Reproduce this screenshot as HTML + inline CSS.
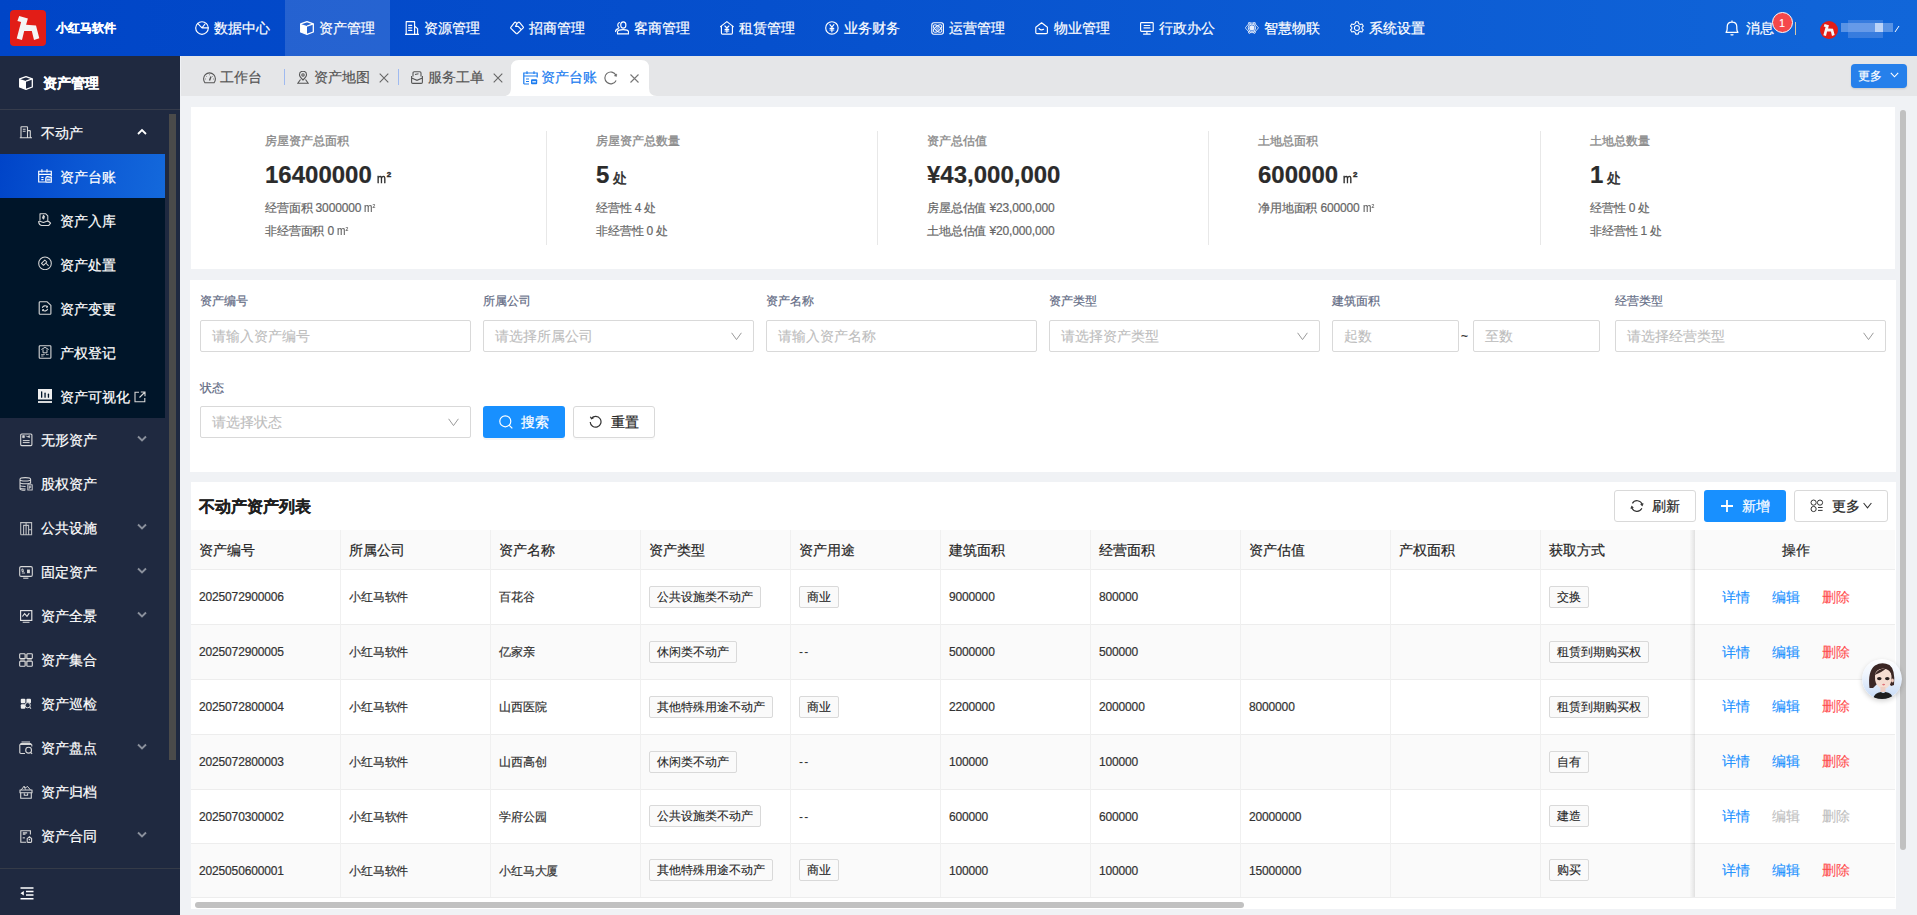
<!DOCTYPE html>
<html><head><meta charset="utf-8">
<style>
*{box-sizing:border-box;margin:0;padding:0}
html,body{width:1917px;height:915px;overflow:hidden;font-family:"Liberation Sans",sans-serif;background:#f0f2f5;color:#333;position:relative}
body{-webkit-text-stroke:0.2px currentColor}
.a{position:absolute}
svg{display:block}
#hdr{position:absolute;left:0;top:0;width:1917px;height:56px;background:linear-gradient(90deg,#0045c7 0%,#0650cd 40%,#1166d9 100%)}
.nav{position:absolute;top:0;height:56px;width:105px;color:#fff;font-size:14px}
.nav.on{background:rgba(255,255,255,0.14)}
.nav svg{position:absolute}
.nav span{position:absolute;left:34px;top:18px;line-height:20px}
#side{position:absolute;left:0;top:56px;width:180px;height:859px;background:#1f2940}
.si{position:absolute;left:0;width:165px;height:44px;color:#fff;font-size:14px}
.si svg{position:absolute}
.si span{position:absolute;left:41px;top:12.5px;line-height:20px}

.si.sub span{left:60px}

#tabs{position:absolute;left:181px;top:56px;width:1736px;height:40px;background:#e5e6e8}
.tab{position:absolute;top:60px;height:36px;font-size:14px;color:#555}
.card{position:absolute;background:#fff}
</style></head><body>
<div id="hdr">
  <div class="a" style="left:10px;top:10px;width:36px;height:36px;background:#e21d17;border-radius:4px">
    <svg width="36" height="36" viewBox="0 0 36 36"><path d="M9.2 6.1 L17.9 8.5 L16.1 14.8 L26 15.5 L29.3 28.2 L24 29.9 L21.8 21 L14.2 21 L12 29.9 L6.7 28.4 L11.1 12 L7.4 11.1 Z" fill="#f4f4f4"/></svg>
  </div>
  <div class="a" style="left:56px;top:18px;font-size:12px;font-weight:bold;color:#fff;line-height:20px">小红马软件</div>
    <div class="nav" style="left:180px"><svg width="14" height="14" viewBox="0 0 14 14" fill="none" stroke="#fff" stroke-width="1.15" stroke-linecap="round" stroke-linejoin="round" style="left:15px;top:21px"><circle cx="7" cy="7" r="6.3"/><path d="M2.6 2.4 L7 6.8 L10 3 M7 6.8 H13.3"/></svg><span>数据中心</span></div>
  <div class="nav on" style="left:285px"><svg width="14" height="14" viewBox="0 0 14 14" style="left:15px;top:21px"><path d="M0.7 2.9 L7 0.7 L13.3 2.9 L13.3 11 L7 13.3 L0.7 11 Z" fill="none" stroke="#fff" stroke-width="1.3" stroke-linejoin="round"/><path d="M0.7 2.9 L7 5.1 L7 13.3 L0.7 11 Z" fill="#fff"/><path d="M7 5.1 L13.3 2.9" stroke="#fff" stroke-width="1.2"/></svg><span>资产管理</span></div>
  <div class="nav" style="left:390px"><svg width="14" height="14" viewBox="0 0 14 14" fill="none" stroke="#fff" stroke-width="1.15" stroke-linecap="round" stroke-linejoin="round" style="left:15px;top:21px"><path d="M0.4 13.3 H13.6 M1.2 13.3 V0.6 H9.6 V13.3 M9.6 5.2 L12.6 7.6 V13.3 M3.6 4.3 H6.8 M3.6 6.8 H6.8 M3.6 9.4 H6.8"/></svg><span>资源管理</span></div>
  <div class="nav" style="left:495px"><svg width="14" height="14" viewBox="0 0 14 14" fill="none" stroke="#fff" stroke-width="1.15" stroke-linecap="round" stroke-linejoin="round" style="left:15px;top:21px"><path d="M0.8 6.4 L4.6 1.4 Q5 1 5.5 1.3 L6.8 2.4 L8.6 1.2 Q9.1 0.9 9.5 1.3 L13.2 5.9 Q13.6 6.4 13.2 6.9 L7.4 12.5 Q6.8 13 6.2 12.5 L0.9 7.3 Q0.5 6.9 0.8 6.4 Z M7 2.6 L5.5 5.3 H8.1 L11 8.3"/></svg><span>招商管理</span></div>
  <div class="nav" style="left:600px"><svg width="14" height="14" viewBox="0 0 14 14" fill="none" stroke="#fff" stroke-width="1.15" stroke-linecap="round" stroke-linejoin="round" style="left:15px;top:21px"><ellipse cx="8.3" cy="4" rx="2.6" ry="3.1"/><path d="M2.5 12.9 V11 Q2.5 8.6 8.2 8.6 Q13.5 8.6 13.5 11 V12.9 Z M4.4 1.5 Q2.6 2.3 2.8 4.4 Q3 6 4 6.6 M3.4 7.6 Q0.6 8.3 0.6 10.6"/></svg><span>客商管理</span></div>
  <div class="nav" style="left:705px"><svg width="14" height="14" viewBox="0 0 14 14" fill="none" stroke="#fff" stroke-width="1.15" stroke-linecap="round" stroke-linejoin="round" style="left:15px;top:21px"><path d="M0.5 5.6 L6.9 0.6 L13.3 5.6 M1.4 5.2 V12 Q1.4 13.1 2.5 13.1 H11.3 Q12.4 13.1 12.4 12 V5.2 M4.9 5 L6.9 7 L8.9 5 M6.9 7 V11.3 M5 8.3 H8.8 M5 10 H8.8"/></svg><span>租赁管理</span></div>
  <div class="nav" style="left:810px"><svg width="14" height="14" viewBox="0 0 14 14" fill="none" stroke="#fff" stroke-width="1.15" stroke-linecap="round" stroke-linejoin="round" style="left:15px;top:21px"><circle cx="6.9" cy="6.9" r="6.2"/><path d="M4.9 3.7 L6.9 6.2 L8.9 3.7 M6.9 6.2 V10.8 M5 7.3 H8.8 M5 9 H8.8"/></svg><span>业务财务</span></div>
  <div class="nav" style="left:915px"><svg width="14" height="14" viewBox="0 0 14 14" fill="none" stroke="#fff" stroke-width="1.1" style="left:15.5px;top:21.5px"><rect x="0.8" y="0.8" width="11.6" height="11.4" rx="2.2"/><ellipse cx="6.6" cy="6.5" rx="5" ry="2.3" transform="rotate(40 6.6 6.5)" stroke-width="0.95"/><ellipse cx="6.6" cy="6.5" rx="5" ry="2.3" transform="rotate(-40 6.6 6.5)" stroke-width="0.95"/><circle cx="6.6" cy="6.5" r="1.7" fill="#fff" fill-opacity="0.5" stroke="none"/></svg><span>运营管理</span></div>
  <div class="nav" style="left:1020px"><svg width="14" height="14" viewBox="0 0 14 14" fill="none" stroke="#fff" stroke-width="1.15" stroke-linecap="round" stroke-linejoin="round" style="left:15px;top:22px"><path d="M0.8 5.2 L6.6 0.8 L12.4 5.2 V10.4 Q12.4 11.6 11.2 11.6 H2 Q0.8 11.6 0.8 10.4 Z M4 6.5 Q6 8.8 8.6 7.3"/></svg><span>物业管理</span></div>
  <div class="nav" style="left:1125px"><svg width="14" height="14" viewBox="0 0 14 14" fill="none" stroke="#fff" stroke-width="1.15" stroke-linecap="round" stroke-linejoin="round" style="left:15px;top:22px"><rect x="0.6" y="0.6" width="12.6" height="8.8" rx="0.8"/><path d="M6.9 9.5 V11.8 M3.5 12.1 H10.3 M4.1 3.5 H9.8"/><path d="M4.1 5.9 H9.8" stroke-width="1.6" stroke-opacity="0.7"/></svg><span>行政办公</span></div>
  <div class="nav" style="left:1230px"><svg width="14" height="14" viewBox="0 0 14 14" fill="none" stroke="#fff" stroke-width="0.9" style="left:15px;top:22px"><path d="M4.4 1 H9.4 L13.5 5.8 L9.4 10.6 H4.4 L0.3 5.8 Z" stroke-opacity="0.85"/><circle cx="4.4" cy="1.2" r="0.9" fill="#0b57d0"/><circle cx="9.4" cy="1.2" r="0.9" fill="#0b57d0"/><circle cx="4.4" cy="10.4" r="0.9" fill="#0b57d0"/><circle cx="9.4" cy="10.4" r="0.9" fill="#0b57d0"/><circle cx="6.9" cy="5.8" r="3.7" fill="#0b57d0"/><circle cx="6.9" cy="5.8" r="2.6" fill="#fff" fill-opacity="0.9" stroke="none"/></svg><span>智慧物联</span></div>
  <div class="nav" style="left:1335px"><svg width="14" height="14" viewBox="0 0 14 14" fill="none" stroke="#fff" stroke-width="1.05" stroke-linejoin="round" style="left:15px;top:21px"><path d="M5.6 0.8 H8.2 L8.7 2.6 L10.3 3.5 L12 2.9 L13.3 5.1 L12 6.3 V7.6 L13.3 8.8 L12 11 L10.3 10.4 L8.7 11.3 L8.2 13.1 H5.6 L5.1 11.3 L3.5 10.4 L1.8 11 L0.5 8.8 L1.8 7.6 V6.3 L0.5 5.1 L1.8 2.9 L3.5 3.5 L5.1 2.6 Z"/><circle cx="6.9" cy="6.95" r="2.5"/></svg><span>系统设置</span></div>
  <!-- right -->
  <svg class="a" style="left:1725px;top:20px" width="14" height="16" viewBox="0 0 14 16" fill="none" stroke="#fff" stroke-width="1.25" stroke-linejoin="round"><path d="M1 12.3 Q2.2 11 2.2 8.5 V6.8 Q2.2 2.2 7 2.2 Q11.8 2.2 11.8 6.8 V8.5 Q11.8 11 13 12.3 Z M5.6 14.4 Q7 15.4 8.4 14.4 M7 0.6 V2.2"/></svg>
  <div class="a" style="left:1746px;top:18px;font-size:14px;color:#fff;line-height:20px">消息</div>
  <div class="a" style="left:1771.5px;top:11.5px;width:21px;height:21px;border-radius:50%;background:#f5484b;border:1px solid #fff;color:#fff;font-size:10px;line-height:21px;text-align:center;font-family:'Liberation Sans',sans-serif">1</div>
  <div class="a" style="left:1795px;top:22px;width:1px;height:13px;background:#d8c9a8"></div>
  <div class="a" style="left:1820px;top:21px;width:18px;height:18px;border-radius:50%;background:#e21d17;overflow:hidden">
    <svg width="18" height="18" viewBox="0 0 36 36"><path d="M9.2 6.1 L17.9 8.5 L16.1 14.8 L26 15.5 L29.3 28.2 L24 29.9 L21.8 21 L14.2 21 L12 29.9 L6.7 28.4 L11.1 12 L7.4 11.1 Z" fill="#f4f4f4"/></svg>
  </div>
  <div class="a" style="left:1841px;top:20px;width:52px;height:18px;filter:blur(0.6px)">
    <div class="a" style="left:0;top:3px;width:52px;height:9px;background:rgba(150,185,240,0.55)"></div>
    <div class="a" style="left:7px;top:0;width:35px;height:18px;background:rgba(130,170,235,0.35)"></div>
    <div class="a" style="left:34px;top:3px;width:8px;height:9px;background:rgba(210,225,250,0.8)"></div>
  </div>
  <svg class="a" style="left:1894px;top:25px" width="6" height="8" viewBox="0 0 6 8"><path d="M1 7 L5 1" stroke="#fff" stroke-width="1"/></svg>
</div>
<div id="side">
  <div class="a" style="left:0;top:53px;width:180px;height:1px;background:#363c4c"></div>
  <svg class="a" style="left:19px;top:20px" width="14" height="14" viewBox="0 0 14 14"><path d="M0.7 2.9 L7 0.7 L13.3 2.9 L13.3 11 L7 13.3 L0.7 11 Z" fill="none" stroke="#fff" stroke-width="1.3" stroke-linejoin="round"/><path d="M0.7 2.9 L7 5.1 L7 13.3 L0.7 11 Z" fill="#fff"/><path d="M7 5.1 L13.3 2.9" stroke="#fff" stroke-width="1.2"/></svg>
  <div class="a" style="left:43px;top:17px;font-size:14px;font-weight:bold;color:#fff;line-height:20px">资产管理</div>
  <div class="a" style="left:169px;top:58px;width:7px;height:646px;background:#4a4a4a"></div>
  <!-- 不动产 -->
  <div class="si" style="top:54px">
    <svg width="14" height="14" viewBox="0 0 14 14" fill="none" stroke="#d8d8d8" stroke-width="1.1" style="left:19px;top:16px"><path d="M0.8 11.7 H13 M2 11.7 V1.2 Q2 0.7 2.5 0.7 H8 Q8.5 0.7 8.5 1.2 V11.7 M8.5 4.6 H10.8 Q11.3 4.6 11.3 5.1 V11.7 M3.8 3.2 H6.6 M3.8 5.3 H6.6"/></svg>
    <span>不动产</span>
    <svg class="chev" width="10" height="7" viewBox="0 0 10 7" fill="none" stroke="#fff" stroke-width="1.8" style="left:137px;top:18px"><path d="M1 6 L5 2 L9 6"/></svg>
  </div>
  <div class="a" style="left:0;top:98px;width:165px;height:264px;background:#001529"></div>
  <div class="a" style="left:0;top:98px;width:165px;height:44px;background:linear-gradient(100deg,#0044c8 0%,#0a56d3 45%,#1469dc 100%)"></div>
  <div class="si sub" style="top:98px">
    <svg width="14" height="14" viewBox="0 0 14 14" fill="none" stroke="#fff" stroke-width="1.15" style="left:38px;top:15px"><path d="M13.3 7.5 V2.2 H0.7 V13 H7 M0.7 5.4 H13.3 M3.9 0.3 V3.6 M9 0.3 V3.6 M3.3 8.3 H5.5 M3.3 10.6 H5.5"/><path d="M7.8 9 Q8 7.5 9.5 7.6 L13.3 8.5 V13.2 H7.8 Z" fill="#fff" fill-opacity="0.25"/><path d="M9 10.8 H12.2"/></svg>
    <span>资产台账</span>
  </div>
  <div class="si sub" style="top:142px">
    <svg width="14" height="14" viewBox="0 0 14 14" fill="none" stroke="#d8d8d8" stroke-width="1.05" stroke-linejoin="round" style="left:38px;top:15px"><path d="M2 7.6 V0.8 H7.8 L9.8 2.8 V7.4 M0.6 8.6 Q1.2 7.9 2.6 8.4 L5.4 9.5 L8.8 8.2 Q10.5 7.8 12.6 10.2 L10.8 12.4 H3.6 Q1 12 0.6 8.6 Z"/><path d="M5.4 2.4 L6.4 3.6 L5.6 6 L4.6 5 Z" fill="#d8d8d8"/></svg>
    <span>资产入库</span>
  </div>
  <div class="si sub" style="top:186px">
    <svg width="14" height="14" viewBox="0 0 14 14" fill="none" stroke="#d8d8d8" stroke-width="1.05" stroke-linejoin="round" style="left:38px;top:14px"><circle cx="7" cy="7.4" r="6.3"/><path d="M3.5 7.3 L6.8 4 L8.8 6 L5.5 9.3 Z M7.8 7 L10.6 9.8"/></svg>
    <span>资产处置</span>
  </div>
  <div class="si sub" style="top:230px">
    <svg width="14" height="14" viewBox="0 0 14 14" fill="none" stroke="#d8d8d8" stroke-width="1.1" stroke-linejoin="round" style="left:38px;top:15px"><path d="M1.2 1.6 Q1.2 0.7 2.1 0.7 H8.9 L12.9 4.4 V12.4 Q12.9 13.3 12 13.3 H2.1 Q1.2 13.3 1.2 12.4 Z"/><path d="M4.3 6.9 A2.8 2.8 0 0 1 9.3 6 M9.7 7.9 A2.8 2.8 0 0 1 4.8 8.9"/><path d="M9.5 4.8 V6.3 H8" stroke-width="0.9"/><path d="M4.5 10.1 V8.6 H6" stroke-width="0.9"/></svg>
    <span>资产变更</span>
  </div>
  <div class="si sub" style="top:274px">
    <svg width="14" height="14" viewBox="0 0 14 14" fill="none" stroke="#d8d8d8" stroke-width="1.1" stroke-linejoin="round" style="left:38px;top:15px"><rect x="1.2" y="0.7" width="11.7" height="12.6" rx="0.8"/><path d="M3.4 4.5 L7 2.3 L10.6 4.5 M5 4.5 V7.8 H9 V4.5" stroke-width="0.95"/><path d="M3.2 9.6 H6.8 M8 9.6 H10.6 M3.2 11 H5.5" stroke-width="0.8"/></svg>
    <span>产权登记</span>
  </div>
  <div class="si sub" style="top:318px">
    <svg width="14" height="14" viewBox="0 0 14 14" style="left:38px;top:15px"><rect x="0" y="0" width="14" height="10.5" fill="#eee"/><rect x="3" y="2.2" width="1.3" height="6.6" rx="0.6" fill="#001529"/><rect x="6.4" y="3.6" width="1.3" height="5.2" rx="0.6" fill="#001529"/><rect x="9.8" y="4.6" width="1.3" height="4.2" rx="0.6" fill="#001529"/><rect x="0" y="12.1" width="14" height="1.8" fill="#eee"/></svg>
    <span>资产可视化</span>
    <svg class="a" style="left:134px;top:17px" width="12" height="12" viewBox="0 0 12 12" fill="none" stroke="#d8d8d8" stroke-width="1.1"><path d="M5 1.2 H1 V10.8 H10.8 V7 M6.8 1 H11 V5.2 M11 1 L5.5 6.5"/></svg>
  </div>
  <div class="si" style="top:361px">
    <svg width="14" height="14" viewBox="0 0 14 14" fill="none" stroke="#d8d8d8" stroke-width="1.1" style="left:20px;top:16px"><rect x="0.7" y="1" width="11.2" height="11.6" rx="1"/><path d="M2.8 7.6 H9.6 M2.8 9.6 H9.6" stroke-width="1"/><path d="M2.6 2.6 H4.4 V4.7 H2.6 Z M5.6 2.8 L7.4 3.6 L9.6 2.6 V4.6 L7.4 3.8" fill="#d8d8d8" stroke-width="0.6"/></svg>
    <span>无形资产</span>
    <svg class="chev" width="10" height="7" viewBox="0 0 10 7" fill="none" stroke="#8a909c" stroke-width="1.9" style="left:137px;top:18px"><path d="M1 1.5 L5 5.5 L9 1.5"/></svg>
  </div>
  <div class="si" style="top:405px">
    <svg width="14" height="14" viewBox="0 0 14 14" fill="none" stroke="#d8d8d8" stroke-width="1.05" style="left:19px;top:16px"><path d="M1 2.2 Q1 0.6 6.3 0.6 Q11.6 0.6 11.6 2.2 M1 2.2 V11.8 Q1 13.3 6.3 13.3 M11.6 2.2 V6.8 M1 2.4 Q1 3.9 6.3 3.9 Q11.6 3.9 11.6 2.4 M1 5.2 Q1 6.8 6.3 6.8 Q11.6 6.8 11.6 5.2 M1 8 Q1 9.4 6.6 9.4 M1 10.6 Q1 12 6.6 12"/><rect x="8.8" y="7.8" width="4.4" height="5.2" fill="#1f2940" stroke="#d8d8d8" stroke-width="0.9"/><path d="M10.2 9.2 H11.8 V10.6 H10.2 M10.2 9 V12" stroke-width="0.8"/></svg>
    <span>股权资产</span>
  </div>
  <div class="si" style="top:449px">
    <svg width="14" height="14" viewBox="0 0 14 14" fill="none" stroke="#d8d8d8" stroke-width="1.1" style="left:20px;top:17px"><path d="M0.7 12.7 V0.6 H11.6 V12.7 H0.7 M3.6 12.7 V3.4 H8.6 V12.7 M6.1 0.6 V3.4 M6.1 3.4 V12.7 M8.6 7.8 H11.6" stroke-opacity="0.85"/></svg>
    <span>公共设施</span>
    <svg class="chev" width="10" height="7" viewBox="0 0 10 7" fill="none" stroke="#8a909c" stroke-width="1.9" style="left:137px;top:18px"><path d="M1 1.5 L5 5.5 L9 1.5"/></svg>
  </div>
  <div class="si" style="top:493px">
    <svg width="14" height="14" viewBox="0 0 14 14" fill="none" stroke="#d8d8d8" stroke-width="1.1" style="left:19px;top:17px"><rect x="0.7" y="0.6" width="12.6" height="9.8" rx="1.4"/><path d="M4.2 12.2 H9.4"/><path d="M2.9 3 L3.9 3 L4.5 5.5 L3 5.5 Z M2.9 7 H6" stroke-width="0.9"/><rect x="8" y="3.6" width="2.9" height="3.6" fill="#d8d8d8" stroke="none"/></svg>
    <span>固定资产</span>
    <svg class="chev" width="10" height="7" viewBox="0 0 10 7" fill="none" stroke="#8a909c" stroke-width="1.9" style="left:137px;top:18px"><path d="M1 1.5 L5 5.5 L9 1.5"/></svg>
  </div>
  <div class="si" style="top:537px">
    <svg width="14" height="14" viewBox="0 0 14 14" fill="none" stroke="#e4e4e4" stroke-width="1.15" style="left:20px;top:17px"><rect x="0.6" y="0.6" width="11.2" height="9.8"/><path d="M2.4 6.5 L4.6 3.6 L7 6.4 L9.3 3.2 M2.7 12.2 H9.5"/></svg>
    <span>资产全景</span>
    <svg class="chev" width="10" height="7" viewBox="0 0 10 7" fill="none" stroke="#8a909c" stroke-width="1.9" style="left:137px;top:18px"><path d="M1 1.5 L5 5.5 L9 1.5"/></svg>
  </div>
  <div class="si" style="top:581px">
    <svg width="14" height="14" viewBox="0 0 14 14" fill="none" stroke="#e0e0e0" stroke-width="1.1" style="left:19px;top:16px"><path d="M6.1 5.5 H1.5 Q0.7 5.5 0.7 4.7 V1.5 Q0.7 0.7 1.5 0.7 H5.3 Q6.1 0.7 6.1 1.5 Z M7.9 5.5 V1.5 Q7.9 0.7 8.7 0.7 H12.5 Q13.3 0.7 13.3 1.5 V4.7 Q13.3 5.5 12.5 5.5 Z M6.1 8.3 V12.5 Q6.1 13.3 5.3 13.3 H1.5 Q0.7 13.3 0.7 12.5 V9.1 Q0.7 8.3 1.5 8.3 Z M7.9 8.3 H12.5 Q13.3 8.3 13.3 9.1 V12.5 Q13.3 13.3 12.5 13.3 H8.7 Q7.9 13.3 7.9 12.5 Z"/><path d="M7 1 V5.6 M1.2 7 H5.8 M8.2 7 H12.8 M7 8.4 V13" stroke="#b0b0b0" stroke-width="1.4"/></svg>
    <span>资产集合</span>
  </div>
  <div class="si" style="top:625px">
    <svg width="14" height="14" viewBox="0 0 14 14" style="left:20px;top:17px"><rect x="0.8" y="0.7" width="4.6" height="4.5" rx="1" fill="#eee"/><rect x="6.4" y="0.7" width="4.6" height="4.5" rx="1" fill="#eee"/><rect x="0.8" y="6.2" width="4.6" height="4.5" rx="1" fill="#eee"/><circle cx="7.7" cy="7.2" r="2.6" fill="#1f2940" stroke="#ddd" stroke-width="1"/><path d="M9.6 9.2 L11 10.6" stroke="#ddd" stroke-width="1.1"/></svg>
    <span>资产巡检</span>
  </div>
  <div class="si" style="top:669px">
    <svg width="14" height="14" viewBox="0 0 14 14" fill="none" stroke="#d8d8d8" stroke-width="1.1" stroke-linejoin="round" style="left:19px;top:16px"><path d="M6 12.5 H2 Q0.8 12.5 0.8 11.3 V3.8 L2.2 2.5 H11.4 L12.8 3.8 V5.6 M1 3.4 H12.6 M2.5 1 H11"/><circle cx="9.6" cy="9.2" r="2.9"/><path d="M11.6 11.4 L13.1 12.9"/></svg>
    <span>资产盘点</span>
    <svg class="chev" width="10" height="7" viewBox="0 0 10 7" fill="none" stroke="#8a909c" stroke-width="1.9" style="left:137px;top:18px"><path d="M1 1.5 L5 5.5 L9 1.5"/></svg>
  </div>
  <div class="si" style="top:713px">
    <svg width="14" height="14" viewBox="0 0 14 14" fill="none" stroke="#d8d8d8" stroke-width="1.1" stroke-linejoin="round" style="left:19px;top:16px"><path d="M1 5 H13 V7.7 H1 Z M1.7 7.7 V13.2 H12.3 V7.7 M5.3 8.6 V10.2 H8.6 V8.6"/><path d="M2.3 4.8 L5 1.3 L6.6 3 L8.3 1.3 L11.4 4.8 M5 1.3 L6.6 4.5" stroke-width="1"/></svg>
    <span>资产归档</span>
  </div>
  <div class="si" style="top:757px">
    <svg width="14" height="14" viewBox="0 0 14 14" fill="none" stroke="#d8d8d8" stroke-width="1.1" style="left:20px;top:17px"><path d="M6.2 12.2 H0.8 V0.7 H10.4 V4.4 M2.8 2.9 H7.2 M2.8 4.3 H5.5"/><rect x="2.7" y="7.3" width="2.2" height="1.1" fill="#d8d8d8" stroke="none"/><path d="M7.2 8.6 L9.4 6.8 L11.6 8.6 V11.6 Q11.6 12.4 10.8 12.4 H8 Q7.2 12.4 7.2 11.6 Z"/><circle cx="9.4" cy="9.6" r="0.8" fill="#d8d8d8" stroke="none"/></svg>
    <span>资产合同</span>
    <svg class="chev" width="10" height="7" viewBox="0 0 10 7" fill="none" stroke="#8a909c" stroke-width="1.9" style="left:137px;top:18px"><path d="M1 1.5 L5 5.5 L9 1.5"/></svg>
  </div>
  <div class="a" style="left:0;top:812px;width:180px;height:1px;background:#353b48"></div>
  <svg class="a" style="left:20px;top:831px" width="14" height="13" viewBox="0 0 14 13" fill="none" stroke="#fff" stroke-width="1.5"><path d="M0.5 1 H13.5 M6 4.5 H13.5 M6 8 H13.5 M0.5 11.8 H13.5"/><path d="M0.5 6.3 L3.8 4 V8.6 Z" fill="#fff" stroke="none"/></svg>
</div>
<div id="tabs"></div>
<svg class="a" style="left:203px;top:72px" width="13" height="12" viewBox="0 0 13 12" fill="none" stroke="#555" stroke-width="1.1"><path d="M2 10.8 Q0.6 9.4 0.6 6.8 A5.9 5.9 0 0 1 12.4 6.8 Q12.4 9.4 11 10.8 Z"/><path d="M6.5 8.5 L8 4.5" stroke-width="1.4"/><path d="M6.5 2.5 V3.2 M3 4 L3.5 4.5 M10 4 L9.5 4.5 M2.2 7 H2.9 M10.1 7 H10.8" stroke-width="0.9"/></svg>
<div class="a" style="left:220px;top:67px;font-size:14px;line-height:20px;color:#555">工作台</div>
<div class="a" style="left:284px;top:69px;width:1px;height:16px;background:#9fbaf0"></div>
<svg class="a" style="left:297px;top:71px" width="12" height="13" viewBox="0 0 12 13" fill="none" stroke="#555" stroke-width="1.1"><path d="M6 9 Q2.5 5.8 2.5 3.8 A3.5 3.5 0 0 1 9.5 3.8 Q9.5 5.8 6 9 Z"/><circle cx="6" cy="3.9" r="1.2"/><path d="M3.5 8.5 L0.8 12.3 H11.2 L8.5 8.5"/></svg>
<div class="a" style="left:314px;top:67px;font-size:14px;line-height:20px;color:#555">资产地图</div>
<svg class="a" style="left:379px;top:73px" width="10" height="10" viewBox="0 0 10 10" stroke="#666" stroke-width="1.1"><path d="M0.7 0.7 L9.3 9.3 M9.3 0.7 L0.7 9.3"/></svg>
<div class="a" style="left:398px;top:69px;width:1px;height:16px;background:#9fbaf0"></div>
<svg class="a" style="left:411px;top:71px" width="12" height="13" viewBox="0 0 12 13" fill="none" stroke="#555" stroke-width="1.1"><path d="M0.6 5 V11.2 Q0.6 12.4 1.8 12.4 H10.2 Q11.4 12.4 11.4 11.2 V5 M0.6 7 L6 9.3 L11.4 7 M2 5.5 V2 Q2 0.8 3.2 0.8 H8.8 Q10 0.8 10 2 V5.5 M4 3.5 L7.5 2.8"/></svg>
<div class="a" style="left:428px;top:67px;font-size:14px;line-height:20px;color:#555">服务工单</div>
<svg class="a" style="left:493px;top:73px" width="10" height="10" viewBox="0 0 10 10" stroke="#666" stroke-width="1.1"><path d="M0.7 0.7 L9.3 9.3 M9.3 0.7 L0.7 9.3"/></svg>
<!-- active tab -->
<svg class="a" style="left:503px;top:60px" width="154" height="36" viewBox="0 0 154 36"><path d="M0 36 Q8 36 8 28 V8 Q8 0 16 0 H138 Q146 0 146 8 V28 Q146 36 154 36 Z" fill="#fff"/></svg>
<svg class="a" style="left:523px;top:71px" width="15" height="14" viewBox="0 0 15 14" fill="none" stroke="#1b7cf0" stroke-width="1.2"><path d="M0.8 13 V2 H14.2 V6.5 M0.8 5 H14.2 M4 0.3 V3 M11 0.3 V3 M3 8 H6 M3 10.5 H6 M6 13 H0.8"/><rect x="8" y="8.3" width="6.2" height="5" rx="1" fill="#1b7cf0" stroke="none"/><rect x="9.3" y="10.2" width="3.6" height="1.2" fill="#fff" stroke="none"/></svg>
<div class="a" style="left:541px;top:67px;font-size:14px;line-height:20px;color:#1b7cf0">资产台账</div>
<svg class="a" style="left:604px;top:71px" width="14" height="14" viewBox="0 0 14 14" fill="none" stroke="#6b6b6b" stroke-width="1.15"><path d="M12 4.2 A5.9 5.9 0 1 0 12.1 9.4"/><path d="M12.7 3 L12.5 5.4 L10.3 4.8 Z" fill="#6b6b6b" stroke-width="0.5"/></svg>
<svg class="a" style="left:630px;top:74px" width="9" height="9" viewBox="0 0 9 9" stroke="#777" stroke-width="1.1"><path d="M0.5 0.5 L8.5 8.5 M8.5 0.5 L0.5 8.5"/></svg>
<!-- more btn -->
<div class="a" style="left:1851px;top:64px;width:56px;height:24px;background:#2680eb;border-radius:4px;box-shadow:0 1px 2px rgba(0,0,0,0.12)"></div>
<div class="a" style="left:1858px;top:66px;font-size:12px;line-height:20px;color:#fff;font-weight:500">更多</div>
<svg class="a" style="left:1890px;top:72px" width="9" height="6" viewBox="0 0 9 6" fill="none" stroke="#fff" stroke-width="1.1"><path d="M0.8 0.8 L4.5 4.8 L8.2 0.8"/></svg>
<!-- main scrollbar -->
<div class="a" style="left:1900px;top:110px;width:6px;height:740px;background:#c1c1c1;border-radius:3px"></div>
<div class="card" style="left:191px;top:107px;width:1704px;height:162px"></div>
<div class="a" style="left:546px;top:131px;width:1px;height:114px;background:#e8e8e8"></div>
<div class="a" style="left:877px;top:131px;width:1px;height:114px;background:#e8e8e8"></div>
<div class="a" style="left:1208px;top:131px;width:1px;height:114px;background:#e8e8e8"></div>
<div class="a" style="left:1540px;top:131px;width:1px;height:114px;background:#e8e8e8"></div>
<style>
.sl{position:absolute;font-size:12px;line-height:18px;color:#8c8c8c;top:132px;-webkit-text-stroke:0.35px currentColor}
.sv{position:absolute;font-size:24px;line-height:30px;color:#2b2b2b;font-weight:bold;top:160px;white-space:nowrap}
.sv small{font-size:14px;font-weight:normal;margin-left:4px;-webkit-text-stroke:0.45px currentColor}
.sv small.u{font-size:13px;margin-left:5px}
.sv small.u .m{display:inline-block;transform:scaleX(0.82);transform-origin:left;margin-right:-2px}
.sv sup{font-size:8px;vertical-align:baseline;position:relative;top:-6px;font-weight:bold;margin-left:1px}
.m2{display:inline-block;letter-spacing:0}
.m2{display:inline-block;transform:scaleX(0.85);transform-origin:left}
.m2 sup{font-size:6px;vertical-align:baseline;position:relative;top:-4.5px;margin-left:0px}
.ss{letter-spacing:-0.15px}
.ss{position:absolute;font-size:12px;line-height:18px;color:#666;white-space:nowrap}
</style>
<div class="sl" style="left:265px">房屋资产总面积</div>
<div class="sv" style="left:265px">16400000<small class="u"><span class="m">m</span><sup>2</sup></small></div>
<div class="ss" style="left:265px;top:199px">经营面积 3000000 <span class="m2">m<sup>2</sup></span></div>
<div class="ss" style="left:265px;top:222px">非经营面积 0 <span class="m2">m<sup>2</sup></span></div>

<div class="sl" style="left:596px">房屋资产总数量</div>
<div class="sv" style="left:596px">5<small>处</small></div>
<div class="ss" style="left:596px;top:199px">经营性 4 处</div>
<div class="ss" style="left:596px;top:222px">非经营性 0 处</div>

<div class="sl" style="left:927px">资产总估值</div>
<div class="sv" style="left:927px">¥43,000,000</div>
<div class="ss" style="left:927px;top:199px">房屋总估值 ¥23,000,000</div>
<div class="ss" style="left:927px;top:222px">土地总估值 ¥20,000,000</div>

<div class="sl" style="left:1258px">土地总面积</div>
<div class="sv" style="left:1258px">600000<small class="u"><span class="m">m</span><sup>2</sup></small></div>
<div class="ss" style="left:1258px;top:199px">净用地面积 600000 <span class="m2">m<sup>2</sup></span></div>

<div class="sl" style="left:1590px">土地总数量</div>
<div class="sv" style="left:1590px">1<small>处</small></div>
<div class="ss" style="left:1590px;top:199px">经营性 0 处</div>
<div class="ss" style="left:1590px;top:222px">非经营性 1 处</div>
<div class="card" style="left:190px;top:280px;width:1706px;height:192px"></div>
<style>
.fl{position:absolute;font-size:12px;line-height:18px;color:#646c85}
.fi{position:absolute;height:32px;border:1px solid #d9d9d9;border-radius:2px;background:#fff}
.fi span{position:absolute;left:11px;top:6px;font-size:14px;line-height:18px;color:#bdbdbd;white-space:nowrap;-webkit-text-stroke:0.1px currentColor}
.fi svg{position:absolute;right:11px;top:11px}
.btn{position:absolute;height:32px;border-radius:3px;font-size:14px;line-height:18px}
</style>
<div class="fl" style="left:200px;top:292px">资产编号</div>
<div class="fi" style="left:200px;top:320px;width:271px"><span>请输入资产编号</span></div>
<div class="fl" style="left:483px;top:292px">所属公司</div>
<div class="fi" style="left:483px;top:320px;width:271px"><span>请选择所属公司</span><svg width="11" height="9" viewBox="0 0 11 9" fill="none" stroke="#9a9a9a" stroke-width="1"><path d="M0.6 0.8 L5.5 7.6 L10.4 0.8"/></svg></div>
<div class="fl" style="left:766px;top:292px">资产名称</div>
<div class="fi" style="left:766px;top:320px;width:271px"><span>请输入资产名称</span></div>
<div class="fl" style="left:1049px;top:292px">资产类型</div>
<div class="fi" style="left:1049px;top:320px;width:271px"><span>请选择资产类型</span><svg width="11" height="9" viewBox="0 0 11 9" fill="none" stroke="#9a9a9a" stroke-width="1"><path d="M0.6 0.8 L5.5 7.6 L10.4 0.8"/></svg></div>
<div class="fl" style="left:1332px;top:292px">建筑面积</div>
<div class="fi" style="left:1332px;top:320px;width:127px"><span>起数</span></div>
<div class="a" style="left:1461px;top:327px;font-size:12px;line-height:18px;color:#333">~</div>
<div class="fi" style="left:1473px;top:320px;width:127px"><span>至数</span></div>
<div class="fl" style="left:1615px;top:292px">经营类型</div>
<div class="fi" style="left:1615px;top:320px;width:271px"><span>请选择经营类型</span><svg width="11" height="9" viewBox="0 0 11 9" fill="none" stroke="#9a9a9a" stroke-width="1"><path d="M0.6 0.8 L5.5 7.6 L10.4 0.8"/></svg></div>
<div class="fl" style="left:200px;top:379px">状态</div>
<div class="fi" style="left:200px;top:406px;width:271px"><span>请选择状态</span><svg width="11" height="9" viewBox="0 0 11 9" fill="none" stroke="#9a9a9a" stroke-width="1"><path d="M0.6 0.8 L5.5 7.6 L10.4 0.8"/></svg></div>
<div class="btn" style="left:483px;top:406px;width:82px;background:#1890ff;box-shadow:0 2px 0 rgba(0,0,0,0.04)"></div>
<svg class="a" style="left:499px;top:415px" width="14" height="14" viewBox="0 0 14 14" fill="none" stroke="#fff" stroke-width="1.2"><circle cx="6.3" cy="6.3" r="5.5"/><path d="M10.3 10.3 L13.3 13.3"/></svg>
<div class="a" style="left:521px;top:413px;font-size:14px;line-height:18px;color:#fff;font-weight:500">搜索</div>
<div class="btn" style="left:573px;top:406px;width:82px;border:1px solid #d9d9d9;background:#fff;box-shadow:0 2px 0 rgba(0,0,0,0.02)"></div>
<svg class="a" style="left:589px;top:415px" width="13" height="13" viewBox="0 0 13 13" fill="none" stroke="#333" stroke-width="1.2"><path d="M2.5 3.2 A5.4 5.4 0 1 1 1.2 7"/><path d="M1 1 V4.2 H4.2" stroke-width="0"/><path d="M1.3 1.8 L2.5 3.8 L4.6 2.8" stroke-width="1.1"/></svg>
<div class="a" style="left:611px;top:413px;font-size:14px;line-height:18px;color:#262626;font-weight:500">重置</div>
<div class="card" style="left:191px;top:482px;width:1705px;height:427px"></div>
<style>
.th{position:absolute;top:541px;font-size:14px;line-height:18px;color:#262626;font-weight:500;white-space:nowrap}
.td{position:absolute;font-size:12px;line-height:16px;color:#333;white-space:nowrap;letter-spacing:-0.15px}
.tg{position:absolute;height:22px;border:1px solid #d9d9d9;background:#fafafa;border-radius:2px;font-size:12px;line-height:20px;color:#262626;padding:0 7px;white-space:nowrap;-webkit-text-stroke:0.12px currentColor}
.lk{position:absolute;font-size:14px;line-height:18px;white-space:nowrap;-webkit-text-stroke:0.1px currentColor}
.vl{position:absolute;width:1px;background:#f0f0f0}
</style>
<div class="a" style="left:199px;top:497px;font-size:16px;line-height:20px;font-weight:bold;color:#1f1f1f">不动产资产列表</div>
<div class="btn" style="left:1614px;top:490px;width:82px;border:1px solid #d9d9d9;background:#fff"></div>
<svg class="a" style="left:1630px;top:500px" width="14" height="13" viewBox="0 0 14 13" fill="none" stroke="#333" stroke-width="1.2"><path d="M2.4 3.4 A5.4 5.4 0 0 1 12.2 4.4"/><path d="M11.8 8.3 A5.4 5.4 0 0 1 1.8 7.6"/><path d="M13.2 3.6 L12.3 6 L10.6 4.4 Z" fill="#333" stroke-width="0.6"/><path d="M0.8 8.4 L1.7 6 L3.4 7.6 Z" fill="#333" stroke-width="0.6"/></svg>
<div class="a" style="left:1652px;top:497px;font-size:14px;line-height:18px;color:#262626;font-weight:500">刷新</div>
<div class="btn" style="left:1704px;top:490px;width:82px;background:#1890ff"></div>
<svg class="a" style="left:1721px;top:500px" width="12" height="12" viewBox="0 0 12 12" stroke="#fff" stroke-width="1.8"><path d="M6 0 V12 M0 6 H12"/></svg>
<div class="a" style="left:1742px;top:497px;font-size:14px;line-height:18px;color:#fff;font-weight:500">新增</div>
<div class="btn" style="left:1794px;top:490px;width:94px;border:1px solid #d9d9d9;background:#fff"></div>
<svg class="a" style="left:1810px;top:499px" width="14" height="14" viewBox="0 0 14 14" fill="none" stroke="#333" stroke-width="1"><circle cx="3.6" cy="3.6" r="2.6"/><circle cx="10" cy="3.6" r="2.6"/><circle cx="3.6" cy="10" r="2.6"/><path d="M8 8.5 H12.6 M8 11.4 H12.6"/></svg>
<div class="a" style="left:1832px;top:497px;font-size:14px;line-height:18px;color:#262626;font-weight:500">更多</div>
<svg class="a" style="left:1863px;top:502px" width="9" height="7" viewBox="0 0 9 7" fill="none" stroke="#333" stroke-width="1.05"><path d="M0.6 1 L4.5 5.8 L8.4 1"/></svg>

<div class="a" style="left:191px;top:530px;width:1704px;height:39px;background:#fafafa"></div>
<div class="a" style="left:191px;top:569.2px;width:1704px;height:54.9px;background:#fff"></div>
<div class="a" style="left:191px;top:624.1px;width:1704px;height:55.1px;background:#fafafa"></div>
<div class="a" style="left:191px;top:679.2px;width:1704px;height:54.4px;background:#fff"></div>
<div class="a" style="left:191px;top:733.6px;width:1704px;height:55.1px;background:#fafafa"></div>
<div class="a" style="left:191px;top:788.7px;width:1704px;height:54.4px;background:#fff"></div>
<div class="a" style="left:191px;top:843.1px;width:1704px;height:53.7px;background:#fafafa"></div>
<div class="a" style="left:191px;top:569px;width:1704px;height:1px;background:#ededed"></div>
<div class="a" style="left:191px;top:624px;width:1704px;height:1px;background:#ededed"></div>
<div class="a" style="left:191px;top:679px;width:1704px;height:1px;background:#ededed"></div>
<div class="a" style="left:191px;top:734px;width:1704px;height:1px;background:#ededed"></div>
<div class="a" style="left:191px;top:789px;width:1704px;height:1px;background:#ededed"></div>
<div class="a" style="left:191px;top:843px;width:1704px;height:1px;background:#ededed"></div>
<div class="a" style="left:191px;top:897px;width:1704px;height:1px;background:#ededed"></div>
<div class="vl" style="left:340px;top:530px;height:367px"></div>
<div class="vl" style="left:490px;top:530px;height:367px"></div>
<div class="vl" style="left:640px;top:530px;height:367px"></div>
<div class="vl" style="left:790px;top:530px;height:367px"></div>
<div class="vl" style="left:940px;top:530px;height:367px"></div>
<div class="vl" style="left:1090px;top:530px;height:367px"></div>
<div class="vl" style="left:1240px;top:530px;height:367px"></div>
<div class="vl" style="left:1390px;top:530px;height:367px"></div>
<div class="vl" style="left:1540px;top:530px;height:367px"></div>
<div class="a" style="left:1690px;top:530px;width:5px;height:367px;background:linear-gradient(90deg,rgba(0,0,0,0.01) 0%,rgba(0,0,0,0.05) 50%,rgba(0,0,0,0.1) 100%)"></div>
<div class="th" style="left:199px">资产编号</div>
<div class="th" style="left:349px">所属公司</div>
<div class="th" style="left:499px">资产名称</div>
<div class="th" style="left:649px">资产类型</div>
<div class="th" style="left:799px">资产用途</div>
<div class="th" style="left:949px">建筑面积</div>
<div class="th" style="left:1099px">经营面积</div>
<div class="th" style="left:1249px">资产估值</div>
<div class="th" style="left:1399px">产权面积</div>
<div class="th" style="left:1549px">获取方式</div>
<div class="th" style="left:1782px">操作</div>
<div class="td" style="left:199px;top:589.4px">2025072900006</div>
<div class="td" style="left:349px;top:589.4px">小红马软件</div>
<div class="td" style="left:499px;top:589.4px">百花谷</div>
<div class="tg" style="left:649px;top:586.1px">公共设施类不动产</div>
<div class="tg" style="left:799px;top:586.1px">商业</div>
<div class="td" style="left:949px;top:589.4px">9000000</div>
<div class="td" style="left:1099px;top:589.4px">800000</div>
<div class="tg" style="left:1549px;top:586.1px">交换</div>
<div class="lk" style="left:1722px;top:587.7px;color:#1890ff">详情</div>
<div class="lk" style="left:1772px;top:587.7px;color:#1890ff">编辑</div>
<div class="lk" style="left:1822px;top:587.7px;color:#ff4d4f">删除</div>
<div class="td" style="left:199px;top:644.4px">2025072900005</div>
<div class="td" style="left:349px;top:644.4px">小红马软件</div>
<div class="td" style="left:499px;top:644.4px">亿家亲</div>
<div class="tg" style="left:649px;top:641.1px">休闲类不动产</div>
<div class="td" style="left:799px;top:644.4px;letter-spacing:1.3px;-webkit-text-stroke:0">--</div>
<div class="td" style="left:949px;top:644.4px">5000000</div>
<div class="td" style="left:1099px;top:644.4px">500000</div>
<div class="tg" style="left:1549px;top:641.1px">租赁到期购买权</div>
<div class="lk" style="left:1722px;top:642.7px;color:#1890ff">详情</div>
<div class="lk" style="left:1772px;top:642.7px;color:#1890ff">编辑</div>
<div class="lk" style="left:1822px;top:642.7px;color:#ff4d4f">删除</div>
<div class="td" style="left:199px;top:699.1px">2025072800004</div>
<div class="td" style="left:349px;top:699.1px">小红马软件</div>
<div class="td" style="left:499px;top:699.1px">山西医院</div>
<div class="tg" style="left:649px;top:695.8px">其他特殊用途不动产</div>
<div class="tg" style="left:799px;top:695.8px">商业</div>
<div class="td" style="left:949px;top:699.1px">2200000</div>
<div class="td" style="left:1099px;top:699.1px">2000000</div>
<div class="td" style="left:1249px;top:699.1px">8000000</div>
<div class="tg" style="left:1549px;top:695.8px">租赁到期购买权</div>
<div class="lk" style="left:1722px;top:697.4px;color:#1890ff">详情</div>
<div class="lk" style="left:1772px;top:697.4px;color:#1890ff">编辑</div>
<div class="lk" style="left:1822px;top:697.4px;color:#ff4d4f">删除</div>
<div class="td" style="left:199px;top:753.9px">2025072800003</div>
<div class="td" style="left:349px;top:753.9px">小红马软件</div>
<div class="td" style="left:499px;top:753.9px">山西高创</div>
<div class="tg" style="left:649px;top:750.6px">休闲类不动产</div>
<div class="td" style="left:799px;top:753.9px;letter-spacing:1.3px;-webkit-text-stroke:0">--</div>
<div class="td" style="left:949px;top:753.9px">100000</div>
<div class="td" style="left:1099px;top:753.9px">100000</div>
<div class="tg" style="left:1549px;top:750.6px">自有</div>
<div class="lk" style="left:1722px;top:752.2px;color:#1890ff">详情</div>
<div class="lk" style="left:1772px;top:752.2px;color:#1890ff">编辑</div>
<div class="lk" style="left:1822px;top:752.2px;color:#ff4d4f">删除</div>
<div class="td" style="left:199px;top:808.6px">2025070300002</div>
<div class="td" style="left:349px;top:808.6px">小红马软件</div>
<div class="td" style="left:499px;top:808.6px">学府公园</div>
<div class="tg" style="left:649px;top:805.3px">公共设施类不动产</div>
<div class="td" style="left:799px;top:808.6px;letter-spacing:1.3px;-webkit-text-stroke:0">--</div>
<div class="td" style="left:949px;top:808.6px">600000</div>
<div class="td" style="left:1099px;top:808.6px">600000</div>
<div class="td" style="left:1249px;top:808.6px">20000000</div>
<div class="tg" style="left:1549px;top:805.3px">建造</div>
<div class="lk" style="left:1722px;top:806.9px;color:#1890ff">详情</div>
<div class="lk" style="left:1772px;top:806.9px;color:#c0c0c0">编辑</div>
<div class="lk" style="left:1822px;top:806.9px;color:#c0c0c0">删除</div>
<div class="td" style="left:199px;top:862.7px">2025050600001</div>
<div class="td" style="left:349px;top:862.7px">小红马软件</div>
<div class="td" style="left:499px;top:862.7px">小红马大厦</div>
<div class="tg" style="left:649px;top:859.4px">其他特殊用途不动产</div>
<div class="tg" style="left:799px;top:859.4px">商业</div>
<div class="td" style="left:949px;top:862.7px">100000</div>
<div class="td" style="left:1099px;top:862.7px">100000</div>
<div class="td" style="left:1249px;top:862.7px">15000000</div>
<div class="tg" style="left:1549px;top:859.4px">购买</div>
<div class="lk" style="left:1722px;top:861.0px;color:#1890ff">详情</div>
<div class="lk" style="left:1772px;top:861.0px;color:#1890ff">编辑</div>
<div class="lk" style="left:1822px;top:861.0px;color:#ff4d4f">删除</div>
<div class="a" style="left:195px;top:902px;width:1049px;height:6px;background:#c1c1c1;border-radius:3px"></div><div class="a" style="left:1862px;top:659px;width:40px;height:40px;border-radius:50%;box-shadow:0 2px 5px rgba(0,0,0,0.18);overflow:hidden">
<svg width="40" height="40" viewBox="0 0 40 40">
<defs><linearGradient id="avbg" x1="0" y1="0" x2="0" y2="1"><stop offset="0" stop-color="#ffffff"/><stop offset="0.4" stop-color="#eef4fd"/><stop offset="1" stop-color="#c6daf6"/></linearGradient></defs>
<circle cx="20" cy="20" r="20" fill="url(#avbg)"/>
<path d="M7.5 29 Q5.5 12 13 6.5 Q20 2.5 27.5 6 Q33.5 10.5 32 26 L29 27 L27 24 L16 24 L11 29 Z" fill="#3b2725"/>
<path d="M13 17 Q13 10 21 9.5 Q29 10 29.5 17 Q30 25 25.5 28.5 Q21.5 31 17.5 28.5 Q12.5 25 13 17 Z" fill="#f5ddd2"/>
<path d="M12.5 16 Q16 9 24 9.5 Q20 13 12.5 16 Z" fill="#3b2725"/>
<path d="M24 9.5 Q29 11 30.5 18 L29.5 12 Z" fill="#3b2725"/>
<ellipse cx="17.3" cy="19.6" rx="2.3" ry="1.7" fill="#2a2020"/>
<ellipse cx="25.3" cy="19.6" rx="2.3" ry="1.7" fill="#2a2020"/>
<ellipse cx="21.6" cy="25.6" rx="1.5" ry="0.8" fill="#e0727a"/>
<rect x="18.5" y="28" width="5" height="5" fill="#efcfc3"/>
<ellipse cx="30.5" cy="21.5" rx="1.4" ry="2" fill="#f0cbbf"/>
<path d="M11 40 Q12.5 33.5 19 33 Q21 35 23.5 33 Q30 33.5 31 40 Z" fill="#1e1e1e"/>
</svg>
</div>
</body></html>
